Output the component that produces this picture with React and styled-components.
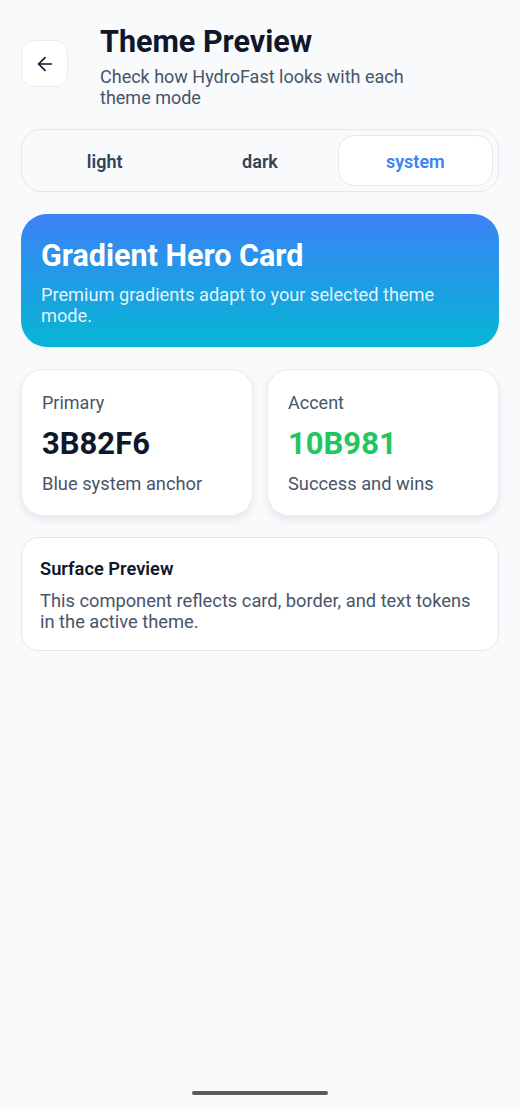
import React, { useState } from 'react';
import styled, { createGlobalStyle } from 'styled-components';

const GlobalStyle = createGlobalStyle`
  html, body {
    margin: 0;
    padding: 0;
    background: #f8fafc;
  }
  body {
    font-family: Roboto, "Noto Sans", sans-serif;
    -webkit-font-smoothing: antialiased;
  }
`;

const Screen = styled.div`
  width: 520px;
  height: 1109px;
  box-sizing: border-box;
  background: #f8fafc;
  padding: 27px 21px 0;
  display: flex;
  flex-direction: column;
  position: relative;
`;

const Header = styled.div`
  display: flex;
  align-items: flex-start;
  gap: 32px;
`;

const BackButton = styled.button`
  width: 47px;
  height: 47px;
  margin-top: 13px;
  flex-shrink: 0;
  border-radius: 13px;
  border: 1px solid #e8ecf2;
  background: #ffffff;
  display: flex;
  align-items: center;
  justify-content: center;
  padding: 0;
  color: #0f172a;
`;

const HeaderText = styled.div`
  display: flex;
  flex-direction: column;
`;

const Title = styled.h1`
  margin: 0;
  font-size: 30.5px;
  line-height: 30px;
  font-weight: 700;
  color: #0f172a;
`;

const Subtitle = styled.p`
  margin: 9px 0 0;
  font-size: 18px;
  line-height: 21px;
  color: #475569;
  max-width: 330px;
`;

const Segmented = styled.div`
  margin-top: 21px;
  height: 63px;
  box-sizing: border-box;
  border: 1px solid #e3e8ef;
  border-radius: 20px;
  background: #f8fafc;
  padding: 5px;
  display: grid;
  grid-template-columns: repeat(3, 1fr);
`;

const Segment = styled.button`
  border: ${(p) => (p.$active ? '1px solid #e3e8ef' : '1px solid transparent')};
  background: ${(p) => (p.$active ? '#ffffff' : 'transparent')};
  border-radius: 16px;
  font-family: Roboto, sans-serif;
  font-size: 18px;
  font-weight: 600;
  color: ${(p) => (p.$active ? '#3b82f6' : '#334155')};
  padding: 2px 0 0;
`;

const Hero = styled.div`
  margin-top: 22px;
  height: 133px;
  box-sizing: border-box;
  border-radius: 26px;
  background: linear-gradient(180deg, #3b82f6 0%, #06b6d4 100%);
  padding: 25px 20px 0;
`;

const HeroTitle = styled.h2`
  margin: 0;
  font-size: 30.5px;
  line-height: 34px;
  font-weight: 700;
  color: #ffffff;
`;

const HeroText = styled.p`
  margin: 11px 0 0;
  font-size: 18.2px;
  line-height: 21px;
  color: rgba(255, 255, 255, 0.9);
`;

const CardRow = styled.div`
  margin-top: 22px;
  display: grid;
  grid-template-columns: 1fr 1fr;
  gap: 14px;
`;

const TokenCard = styled.div`
  height: 147px;
  box-sizing: border-box;
  background: #ffffff;
  border: 1px solid #e8ecf2;
  border-radius: 22px;
  box-shadow: 0 4px 8px rgba(15, 23, 42, 0.08);
  padding: 22px 20px 0;
`;

const TokenLabel = styled.div`
  font-size: 18px;
  line-height: 22px;
  color: #475569;
`;

const TokenValue = styled.div`
  margin-top: 13px;
  font-size: 31px;
  line-height: 34px;
  font-weight: 700;
  color: ${(p) => p.$color};
`;

const TokenNote = styled.div`
  margin-top: 12px;
  font-size: 18.3px;
  line-height: 22px;
  color: #475569;
`;

const Surface = styled.div`
  margin-top: 21px;
  height: 114px;
  box-sizing: border-box;
  background: #ffffff;
  border: 1px solid #e3e8ef;
  border-radius: 18px;
  padding: 20px 18px 0;
`;

const SurfaceTitle = styled.div`
  font-size: 18.3px;
  line-height: 22px;
  font-weight: 600;
  color: #0f172a;
`;

const SurfaceText = styled.p`
  margin: 10px 0 0;
  font-size: 18.3px;
  line-height: 21px;
  color: #475569;
`;

const HomeIndicator = styled.div`
  position: absolute;
  left: 192px;
  bottom: 14px;
  width: 136px;
  height: 4px;
  border-radius: 2px;
  background: #5b5b5b;
`;

const modes = ['light', 'dark', 'system'];

const tokens = [
  { label: 'Primary', value: '3B82F6', color: '#0f172a', note: 'Blue system anchor' },
  { label: 'Accent', value: '10B981', color: '#22c55e', note: 'Success and wins' },
];

const App = () => {
  const [mode, setMode] = useState('system');

  return (
    <>
      <GlobalStyle />
      <Screen>
        <Header>
          <BackButton aria-label="Back">
            <svg width="22" height="22" viewBox="0 0 24 24" fill="none" stroke="currentColor" strokeWidth="1.8" strokeLinecap="round" strokeLinejoin="round">
              <path d="M19 12H5" />
              <path d="M12 19l-7-7 7-7" />
            </svg>
          </BackButton>
          <HeaderText>
            <Title>Theme Preview</Title>
            <Subtitle>Check how HydroFast looks with each theme mode</Subtitle>
          </HeaderText>
        </Header>

        <Segmented>
          {modes.map((m) => (
            <Segment key={m} $active={mode === m} onClick={() => setMode(m)}>
              {m}
            </Segment>
          ))}
        </Segmented>

        <Hero>
          <HeroTitle>Gradient Hero Card</HeroTitle>
          <HeroText>Premium gradients adapt to your selected theme mode.</HeroText>
        </Hero>

        <CardRow>
          {tokens.map((t) => (
            <TokenCard key={t.label}>
              <TokenLabel>{t.label}</TokenLabel>
              <TokenValue $color={t.color}>{t.value}</TokenValue>
              <TokenNote>{t.note}</TokenNote>
            </TokenCard>
          ))}
        </CardRow>

        <Surface>
          <SurfaceTitle>Surface Preview</SurfaceTitle>
          <SurfaceText>This component reflects card, border, and text tokens in the active theme.</SurfaceText>
        </Surface>

        <HomeIndicator />
      </Screen>
    </>
  );
};

export default App;
